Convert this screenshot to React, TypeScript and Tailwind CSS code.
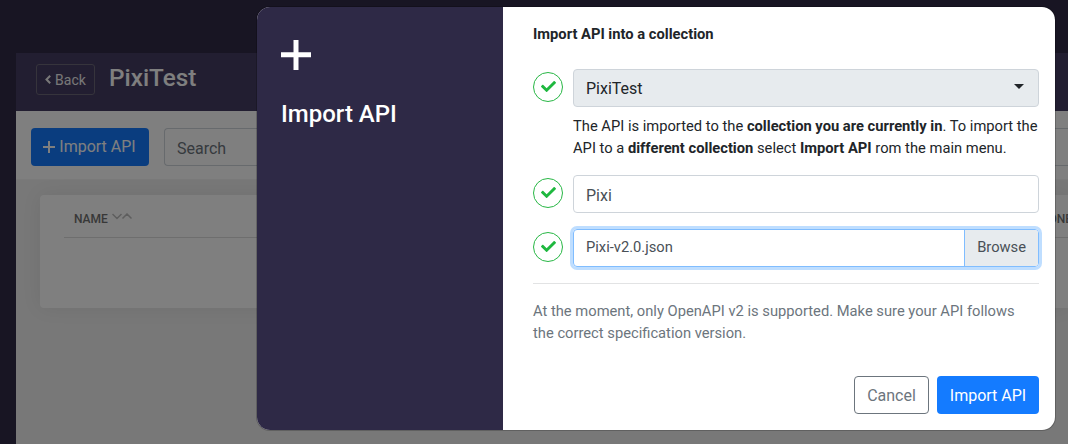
import React from "react";
import { FaCheck } from "react-icons/fa";

function StatusCheck() {
  return (
    <span className="mt-[3px] flex size-[30px] shrink-0 items-center justify-center rounded-full border border-[#28b745] pb-0.5 text-[#1fb83f]">
      <FaCheck className="size-[15px]" />
    </span>
  );
}

function PageHeader() {
  return (
    <header className="flex h-[58px] items-start bg-[#443c62] pl-5 pt-[11px]">
      <button className="flex h-[31px] w-[59px] items-center justify-center gap-1 rounded-[3px] border border-[#6c6878] text-sm text-[#f0f0f0]">
        <svg className="h-[9px] w-[6px]" viewBox="0 0 6 9" fill="none" stroke="currentColor" strokeWidth="2">
          <path d="M5.2 0.8 1.5 4.5 5.2 8.2" />
        </svg>
        Back
      </button>
      <h1 className="ml-[14px] text-[24.3px] leading-[27px] font-medium text-white">PixiTest</h1>
    </header>
  );
}

function Toolbar() {
  return (
    <div className="flex h-[69px] gap-[15px] border-b border-[#f4f4f4] bg-white pl-[15px] pt-[17px]">
      <button className="flex h-[38px] w-[118px] shrink-0 items-center justify-center gap-1 rounded bg-[#147bff] text-base text-white">
        <svg className="-ml-px size-[12px]" viewBox="0 0 12 12" fill="none" stroke="currentColor" strokeWidth="2">
          <path d="M6 0v12M0 6h12" />
        </svg>
        Import API
      </button>
      <div className="flex h-[38px] flex-1 items-center rounded-l border border-r-0 border-[#ced4da] pl-3 pt-[3px] text-[#6c757d]">
        Search
      </div>
    </div>
  );
}

function ApiTable() {
  return (
    <section className="ml-6 mt-[15px] h-[113px] rounded-l bg-white pl-6 shadow-[0_0_20px_rgba(0,0,0,0.07)]">
      <div className="flex h-[43px] items-center justify-between overflow-hidden border-b border-[#dcdcdc] pl-2.5 pt-1.5 text-xs font-medium text-[#707070]">
        <span className="flex items-center gap-1">
          NAME
          <svg className="-mt-1.5 h-[7px] w-5" viewBox="0 0 20 7" fill="none" stroke="#bcbcbc" strokeWidth="1.5">
            <path d="M0.5 1 5 5.5 9.5 1M10.5 5.5 15 1 19.5 5.5" />
          </svg>
        </span>
        <span className="-mr-1">ONE</span>
      </div>
    </section>
  );
}

function ImportDialog() {
  return (
    <div role="dialog" className="flex h-[425px] w-[800px] overflow-hidden rounded-[14px] border border-black/20 bg-white bg-clip-padding">
      <aside className="w-[246px] shrink-0 bg-[#2e2946] pl-6 pt-8 text-white">
        <svg className="size-[31px]" viewBox="0 0 31 31" fill="currentColor">
          <path d="M12.5 1h5v12.3h12.5v5H17.5V31h-5V18.3H0v-5h12.5z" />
        </svg>
        <h2 className="mt-[30px] text-2xl leading-[29px] font-medium">Import API</h2>
      </aside>
      <main className="w-[552px] pl-[30px] pr-4 pt-4 text-[14.72px] leading-[22px] text-[#212529]">
        <h3 className="h-[46px] font-bold">Import API into a collection</h3>
        <div className="flex gap-2.5">
          <StatusCheck />
          <div className="w-[466px]">
            <div className="flex h-[38px] items-center justify-between rounded border border-[#ced4da] bg-[#e7ebee] pl-3 pr-3.5 pt-0.5 text-base">
              PixiTest
              <svg className="-mt-1.5 h-[5px] w-[10px]" viewBox="0 0 10 5" fill="currentColor">
                <path d="M0 0h10L5 5z" />
              </svg>
            </div>
            <p className="mt-2 whitespace-nowrap">
              The API is imported to the <b>collection you are currently in</b>. To import the
              <br />
              API to a <b>different collection</b> select <b>Import API</b> rom the main menu.
            </p>
          </div>
        </div>
        <div className="mt-4 flex gap-2.5">
          <StatusCheck />
          <div className="flex h-[38px] w-[466px] items-center rounded border border-[#ced4da] pl-3 pt-[3px] text-base text-[#495057]">
            Pixi
          </div>
        </div>
        <div className="mt-4 flex gap-2.5">
          <StatusCheck />
          <div className="flex h-[38px] w-[466px] overflow-hidden rounded border border-[#80bdff] leading-[35px] text-[#495057] shadow-[0_0_0_3px_#bfdeff]">
            <span className="flex-1 pl-3">Pixi-v2.0.json</span>
            <span className="border-l border-[#80bdff] bg-[#e7ebee] px-3">Browse</span>
          </div>
        </div>
        <hr className="mt-4 border-[#e2e3e4]" />
        <p className="mt-4 whitespace-nowrap text-[#6c757d]">
          At the moment, only OpenAPI v2 is supported. Make sure your API follows
          <br />
          the correct specification version.
        </p>
        <div className="mt-8 flex justify-end gap-2 text-base">
          <button className="h-[38px] w-[75px] rounded border border-[#6c757d] pt-px text-[#6c757d]">Cancel</button>
          <button className="h-[38px] w-[102px] rounded bg-[#147bff] pt-px text-white">Import API</button>
        </div>
      </main>
    </div>
  );
}

export default function App() {
  return (
    <div className="relative h-[444px] w-[1068px] overflow-hidden bg-[#302a46] pl-4 pt-[53px] font-['Roboto',sans-serif]">
      <div className="h-[391px] bg-[#f0f0f0]">
        <PageHeader />
        <Toolbar />
        <ApiTable />
      </div>
      <div className="absolute inset-0 bg-black/50 pl-64 pt-1.5">
        <ImportDialog />
      </div>
    </div>
  );
}
